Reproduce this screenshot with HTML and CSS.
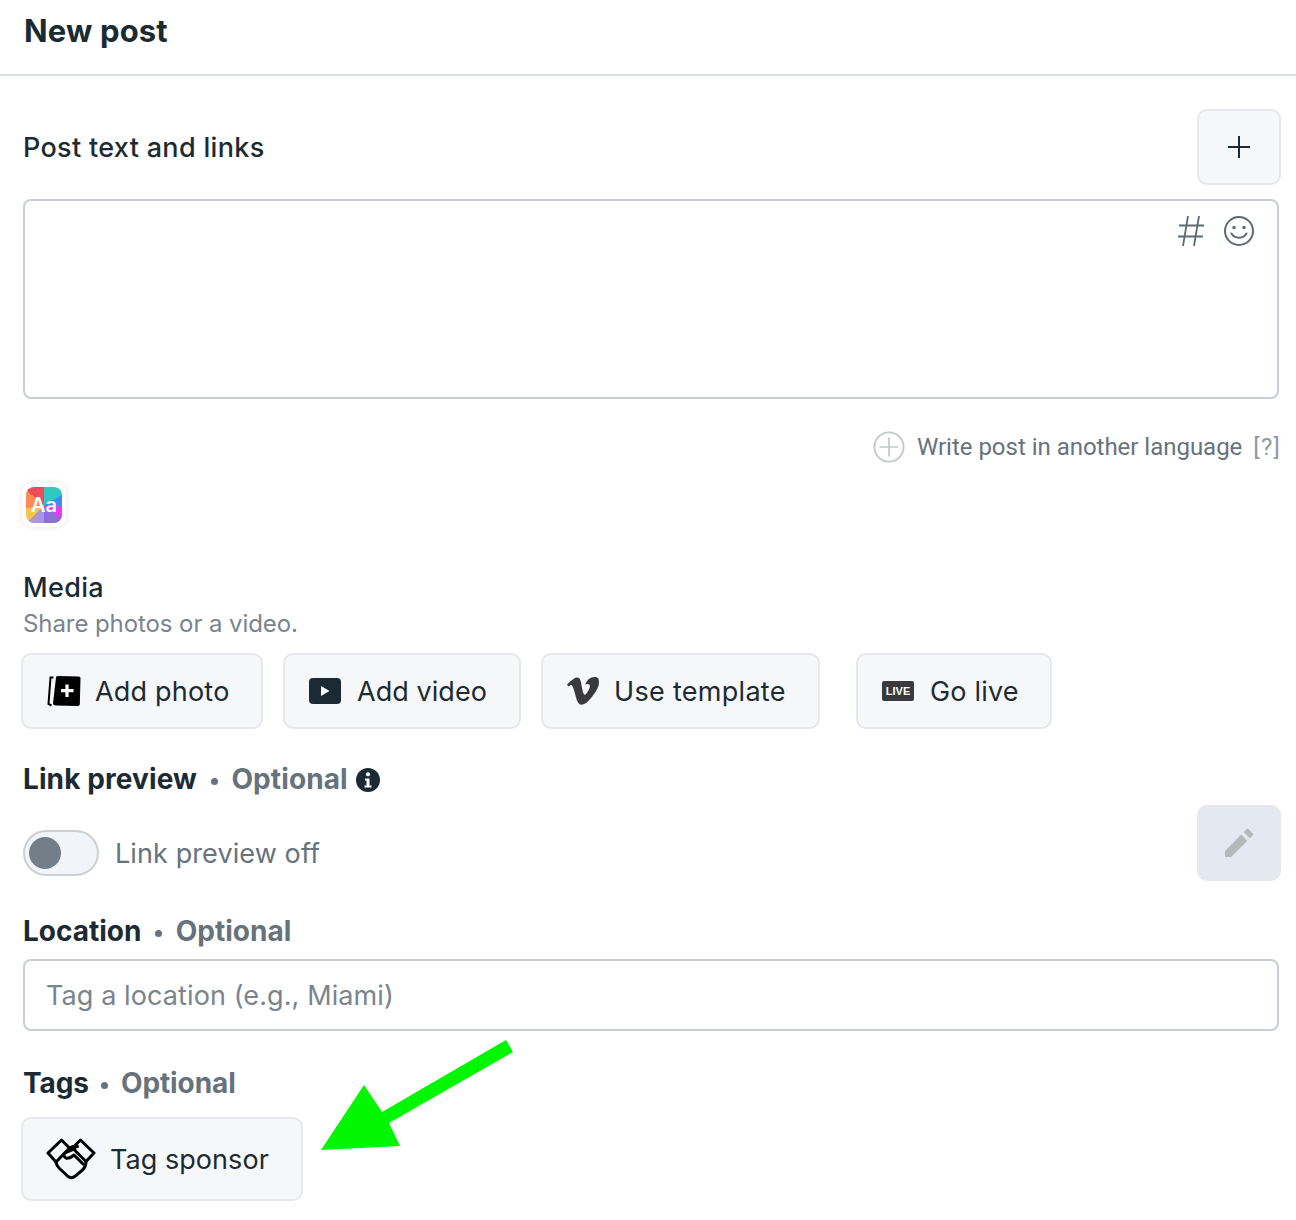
FILE: index.html
```html
<!DOCTYPE html>
<html lang="en">
<head>
<meta charset="utf-8">
<title>New post</title>
<link rel="stylesheet" href="styles.css">
</head>
<body>
<header class="top"><h1>New post</h1></header>
<main class="form">
  <div class="row-between post-head">
    <h2 class="label">Post text and links</h2>
    <button class="btn square"><svg width="28" height="28" viewBox="0 0 28 28"><path d="M14 3v22M3 14h22" stroke="#1c2b33" stroke-width="2" fill="none"/></svg></button>
  </div>
  <div class="textarea">
    <svg class="ta-hash" width="28" height="34" viewBox="0 0 28 34"><path d="M11 2 6 32M22 2l-5 30M2 11.500h25M1 22.500h25" stroke="#5d6a73" stroke-width="1.800" fill="none"/></svg>
    <svg width="32" height="32" viewBox="0 0 32 32"><circle cx="16" cy="16" r="14" stroke="#5d6a73" stroke-width="2" fill="none"/><circle cx="11" cy="12.500" r="1.700" fill="#5d6a73"/><circle cx="21" cy="12.500" r="1.700" fill="#5d6a73"/><path d="M8.500 18.500c3 5.500 12 5.500 15 0" stroke="#5d6a73" stroke-width="2" fill="none" stroke-linecap="round"/></svg>
  </div>
  <div class="lang">
    <svg width="32" height="34" viewBox="0 0 34 34"><circle cx="17" cy="17" r="15.500" stroke="#c4c8cc" stroke-width="2" fill="none"/><path d="M17 7v20M7 17h20" stroke="#c4c8cc" stroke-width="1.800" fill="none"/></svg>
    <span class="lang-text">Write post in another language</span>
    <span class="lang-help">[?]</span>
  </div>
  <div class="aa-wrap"><div class="aa">Aa</div></div>
  <h2 class="label media-label">Media</h2>
  <p class="sub">Share photos or a video.</p>
  <div class="media-btns">
    <button class="btn b-photo"><svg width="34" height="32" viewBox="0 0 34 32"><path d="M6.500 2.500H3.500L1.500 29l3 1.500" stroke="#000" stroke-width="2" fill="none"/><path d="M9 2.500C9 1.500 10 1 11 1l20.500.5c1.300 0 2 .8 2 2l-.7 25.500c0 1.300-.8 2-2 2L9 30.500c-1.500 0-3-.7-3-2z" fill="#000"/><path d="M20 9.500v12.500M14 15.700h12.500" stroke="#fff" stroke-width="3.200" fill="none"/></svg><span>Add photo</span></button>
    <button class="btn b-video"><svg width="32" height="26" viewBox="0 0 32 26"><rect width="32" height="26" rx="4" fill="#1c2b33"/><path d="M12 8v10l8.500-5z" fill="#fff"/></svg><span>Add video</span></button>
    <button class="btn b-tpl"><svg width="32" height="28" viewBox="0 0 32 28"><path d="M31.900 6.500c-.1 3.100-2.300 7.400-6.500 12.800-4.400 5.700-8 8.500-11 8.500-1.900 0-3.500-1.700-4.800-5.200L7 13.100C6.100 9.600 5 7.900 3.900 7.900c-.2 0-1.100.5-2.500 1.500L0 7.500c1.600-1.400 3.100-2.800 4.700-4.200C6.800 1.400 8.400.500 9.500.4c2.500-.2 4 1.500 4.600 5.100.6 3.900 1.100 6.300 1.300 7.300.7 3.300 1.500 4.900 2.400 4.900.7 0 1.700-1.100 3-3.200 1.300-2.100 2-3.700 2.100-4.800.2-1.800-.5-2.700-2.100-2.700-.8 0-1.500.2-2.400.5C20 2.700 23.400-.1 28.100 0c3.500.1 4 2.400 3.800 6.500z" fill="#3a3a3c"/></svg><span>Use template</span></button>
    <button class="btn b-live"><b class="live">LIVE</b><span>Go live</span></button>
  </div>
  <h2 class="label strong lp-head">Link preview <i class="dot"></i> <em>Optional</em><svg class="info" width="24" height="24" viewBox="0 0 24 24"><circle cx="12" cy="12" r="12" fill="#1c2b33"/><circle cx="12" cy="6.300" r="2.100" fill="#fff"/><path d="M9 10.500h4.500v7H15.500v2h-7v-2h2v-5H9z" fill="#fff"/></svg></h2>
  <div class="row-between lp-row">
    <div class="toggle-wrap">
      <div class="toggle"><div class="knob"></div></div>
      <span class="toggle-text">Link preview off</span>
    </div>
    <button class="pencil"><svg width="30" height="30" viewBox="0 0 32 32"><path d="M1 31V24.500L18.500 7l6.500 6.500L7.500 31zM21 4.500 24 1.500c.8-.8 1.700-.8 2.500 0l4 4c.8.800.8 1.700 0 2.500l-3 3z" fill="#b6b9bc"/></svg></button>
  </div>
  <h2 class="label strong loc-head">Location <i class="dot"></i> <em>Optional</em></h2>
  <div class="input">Tag a location (e.g., Miami)</div>
  <h2 class="label strong tag-head">Tags <i class="dot"></i> <em>Optional</em></h2>
  <button class="btn b-tag"><svg width="50" height="42" viewBox="0 0 50 42"><g fill="none" stroke="#000" stroke-width="3" stroke-linejoin="round" stroke-linecap="round"><path d="M2 15 15.500 2 23.500 10 10 24z"/><path d="M48 15 34.500 2 26.500 10 40 23.500z"/><path d="M10 24c.3 3 2 5 3.500 6.500l8 7.500c2.500 2.200 5 2.200 7.500.3L37 31.500c1.500-1.500 3-4.500 3-8"/><path d="M23.500 10c3-1.800 5-2 8-1.500M29 10.500 19.500 14.500c-2 1-2 4.500.5 5.500 2 .6 5-.5 8-3l9 9"/></g></svg><span>Tag sponsor</span></button>
</main>
<svg class="arrow" width="196" height="114" viewBox="0 0 196 114"><path d="M1 112 44 47 62 74 186 2 193 14 69 85 80 108z" fill="#00f700"/></svg>
</body>
</html>
```
FILE: styles.css
```css
* { box-sizing: border-box; }
html, body { margin: 0; padding: 0; }
body {
  position: relative;
  width: 1296px;
  height: 1220px;
  overflow: hidden;
  background: #fff;
  color: #1c2b33;
  font-family: Inter, "Liberation Sans", sans-serif;
}
.top {
  height: 76px;
  border-bottom: 2px solid #dcdfe2;
  padding: 12px 24px 0;
}
.top h1 {
  margin: 0;
  font-size: 31px;
  line-height: 38px;
  font-weight: 700;
  letter-spacing: .15px;
}
.form { padding: 33px 15px 0 23px; }
.row-between { display: flex; justify-content: space-between; align-items: center; }
.label {
  margin: 0 0 -1px;
  padding-top: 1px;
  font-size: 27px;
  line-height: 36px;
  font-weight: 500;
  letter-spacing: .32px;
}
.strong {
  margin-bottom: 0;
  padding-top: 0;
  font-size: 28px;
  font-weight: 700;
  letter-spacing: 0;
}
.strong em { font-style: normal; color: #67737c; }
.dot {
  display: inline-block;
  width: 7px;
  height: 7px;
  border-radius: 50%;
  background: #67737c;
  margin: 0 7px;
  vertical-align: 4px;
}
.btn {
  display: flex;
  align-items: center;
  background: #f6f7f9;
  border: 2px solid #e6e8eb;
  border-radius: 10px;
  color: #1c2b33;
  font: 400 27px/36px Inter, "Liberation Sans", sans-serif;
  letter-spacing: .2px;
  padding: 0;
}
.btn span { margin-top: 2px; }
.square { width: 84px; height: 76px; justify-content: center; }
.textarea {
  height: 200px;
  margin-top: 14px;
  margin-right: 2px;
  border: 2px solid #c9ced6;
  border-radius: 8px;
  padding: 14px 22px 0 0;
  display: flex;
  justify-content: flex-end;
  align-items: flex-start;
  gap: 18px;
}
.ta-hash { margin-top: -1px; }
.lang {
  display: flex;
  align-items: center;
  justify-content: flex-end;
  margin-top: 31px;
  height: 34px;
  font-family: Roboto, "Liberation Sans", sans-serif;
  font-size: 24px;
  color: #67737c;
}
.lang-text { margin-left: 12px; letter-spacing: -.02px; }
.lang-help { margin-left: 11px; color: #91999f; letter-spacing: 1.200px; }
.aa-wrap {
  width: 44px;
  height: 44px;
  margin: 19px 0 0 -1px;
  padding: 4px;
  border-radius: 10px;
  background: #fff;
  box-shadow: 0 0 6px rgba(0, 0, 0, .1);
}
.aa {
  width: 36px;
  height: 36px;
  border-radius: 8px;
  background: conic-gradient(#30c9c2 0 17%, #3f8df0 17% 26%, #e13cf0 26% 36%, #8d6fd6 36% 50%, #ab94e0 50% 62%, #f7c44f 62% 72%, #ff8a54 72% 86%, #ee4c5c 86% 100%);
  color: #fff;
  font: 600 20px/36px Inter, "Liberation Sans", sans-serif;
  text-align: center;
}
.media-label { margin-top: 42px; }
.sub {
  margin: 1px 0 0;
  font-size: 24px;
  line-height: 36px;
  color: #7a848c;
  letter-spacing: -.08px;
}
.media-btns {
  display: flex;
  margin: 11px 0 0 -2px;
}
.media-btns .btn { height: 76px; }
.b-photo { width: 242px; padding-left: 24px; gap: 14px; }
.b-video { width: 238px; margin-left: 20px; padding-left: 24px; gap: 16px; letter-spacing: .05px; }
.b-tpl { width: 279px; margin-left: 20px; padding-left: 24px; gap: 15px; letter-spacing: .3px; }
.b-live { width: 196px; margin-left: 36px; padding-left: 24px; gap: 16px; }
.live {
  width: 32px;
  height: 20px;
  border-radius: 2px;
  background: #3a3a3c;
  color: #fff;
  font: 700 11px/20px "Liberation Sans", sans-serif;
  text-align: center;
  letter-spacing: 0;
}
.lp-head { margin-top: 32px; letter-spacing: .1px; }
.info { margin-left: 8px; vertical-align: -3px; }
.lp-row { margin-top: 8px; height: 76px; }
.toggle-wrap { display: flex; align-items: center; gap: 16px; margin-top: 19px; }
.toggle {
  width: 76px;
  height: 46px;
  border: 2px solid #ccd0d5;
  border-radius: 23px;
  background: #f1f4f8;
  padding: 5px 4px;
}
.knob { width: 32px; height: 32px; border-radius: 50%; background: #737e88; }
.toggle-text { font-size: 27px; color: #67737c; letter-spacing: .1px; margin-top: 2px; }
.pencil {
  width: 84px;
  height: 76px;
  border: 0;
  border-radius: 10px;
  background: #e4e8f1;
  display: flex;
  align-items: center;
  justify-content: center;
  padding: 0;
}
.loc-head { margin-top: 32px; }
.input {
  height: 72px;
  margin-top: 10px;
  margin-right: 2px;
  border: 2px solid #c9ced6;
  border-radius: 8px;
  padding: 0 22px 0 21px;
  font-size: 27px;
  line-height: 70px;
  color: #7a848c;
  letter-spacing: .1px;
}
.tag-head { margin-top: 34px; letter-spacing: -.1px; }
.tag-head .dot { margin: 0 6px; }
.b-tag {
  width: 282px;
  height: 84px;
  margin: 16px 0 0 -2px;
  padding-left: 23px;
  gap: 14px;
  letter-spacing: .05px;
}
.arrow { position: absolute; left: 320px; top: 1038px; }
```
